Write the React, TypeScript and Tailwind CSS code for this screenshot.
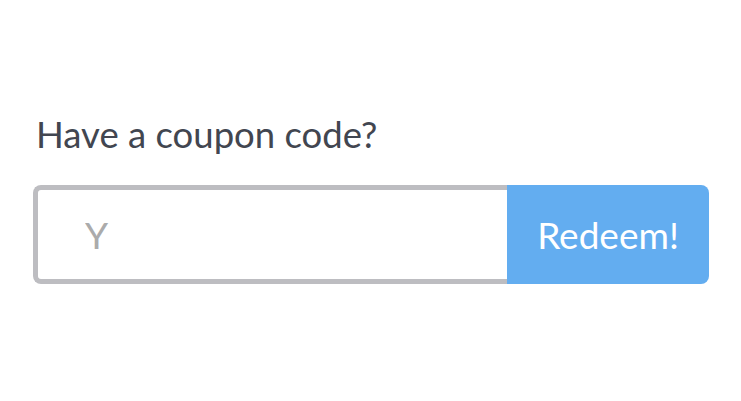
export default function App() {
  return (
    <div className="min-h-[401px] w-full bg-white pl-[33px] pr-[32px] pt-[111px] font-['Lato',sans-serif]">
      <label className="block text-[36.5px] leading-[46px] text-[#424650] pl-[3px]">
        Have a coupon code?
      </label>
      <div className="mt-[28px] flex h-[99px] w-[676px]">
        <input
          className="h-full min-w-0 flex-1 rounded-l-[8px] border-[5px] border-r-0 border-[#bdbdc1] bg-white pl-[47px] text-[37px] text-[#555] placeholder:text-[#ababab] outline-none"
          placeholder="Y"
        />
        <button className="h-full w-[202px] shrink-0 rounded-r-[8px] bg-[#63adf0] text-[37px] text-white">
          Redeem!
        </button>
      </div>
    </div>
  );
}
